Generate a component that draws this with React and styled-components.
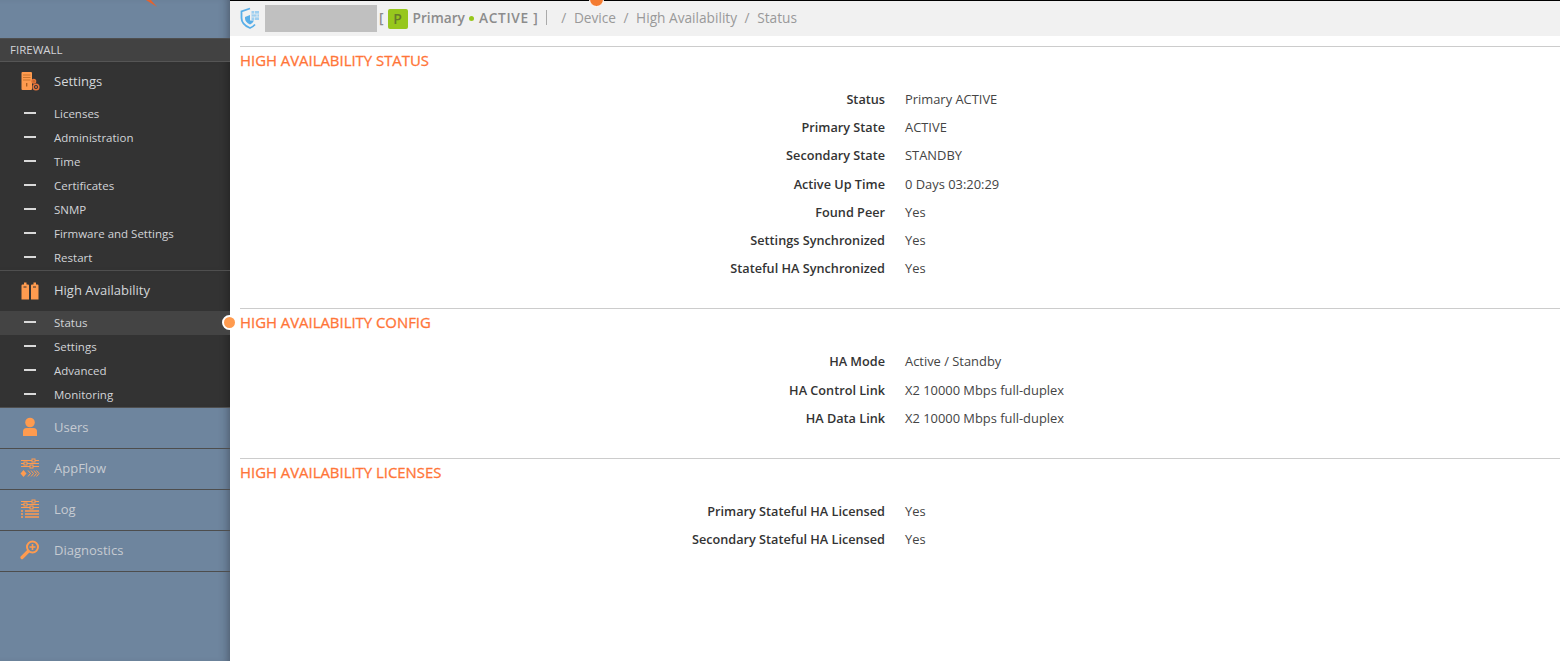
import React from "react";
import styled, { createGlobalStyle } from "styled-components";

const Global = createGlobalStyle`
  html, body { margin: 0; padding: 0; height: 100%; overflow: hidden; }
  body { font-family: "Open Sans", "Noto Sans", sans-serif; background: #fff; }
`;

const orange = "#ff9b4f";
const slate = "#6e859e";

const SettingsIcon = () => (
  <svg width="20" height="20" viewBox="0 0 20 20">
    <rect x="1.500" y="1" width="10.500" height="18" rx="1" fill={orange} />
    <path d="M3 4h7.500M3 6.500h7.500M3 9h7.500" stroke="#c9742c" strokeWidth="1" />
    <path d="M6.700 12v3.500" stroke="#a85c1e" strokeWidth="1.300" />
    <circle cx="13.800" cy="10.300" r="1.900" fill="#c96a2a" stroke="#e8743b" strokeWidth="1.200" />
    <circle cx="16" cy="16" r="2.800" fill="none" stroke="#e8743b" strokeWidth="1.500" />
    <circle cx="16" cy="16" r="1" fill="#e8743b" />
  </svg>
);

const HaIcon = () => (
  <svg width="20" height="20" viewBox="0 0 20 20">
    <path d="M1.500 5.500q0-1 1-1H4V2.500h2.500v2H8q1 0 1 1V19.500H1.500z" fill={orange} />
    <path d="M11 5.500q0-1 1-1h1.500V2.500H16v2h1.500q1 0 1 1V19.500H11z" fill={orange} />
    <path d="M3.500 7h3M13 7h3" stroke="#333" strokeWidth="1.200" />
  </svg>
);

const UsersIcon = () => (
  <svg width="20" height="20" viewBox="0 0 20 20">
    <circle cx="10" cy="5.500" r="4.800" fill={orange} />
    <path d="M3 19v-4.500q0-3.500 3.500-3.500h7q3.500 0 3.500 3.500V19z" fill={orange} />
  </svg>
);

const Sliders = () => (
  <g stroke={orange} strokeWidth="1" fill="none">
    <path d="M1 2.500h18M1 5.500h18M1 8.500h18" />
    <rect x="12" y="1" width="3" height="3" fill={slate} />
    <rect x="4" y="4" width="3" height="3" fill={slate} />
    <rect x="10" y="7" width="3" height="3" fill={slate} />
  </g>
);

const AppFlowIcon = () => (
  <svg width="20" height="20" viewBox="0 0 20 20">
    <Sliders />
    <path d="M3.500 12l3 3.500-3 3.500-3-3.500z" fill={orange} />
    <path d="M8 12.500l2.500 3-2.500 3M11 12.500l2.500 3-2.500 3M14 12.500l2.500 3-2.500 3M16.500 12.500l2.500 3-2.500 3" stroke={orange} strokeWidth="1" fill="none" />
  </svg>
);

const LogIcon = () => (
  <svg width="20" height="20" viewBox="0 0 20 20">
    <Sliders />
    <path d="M1 12h2M5 12h14M1 15h2M5 15h14M1 18h2M5 18h14" stroke={orange} strokeWidth="1.400" />
  </svg>
);

const DiagIcon = () => (
  <svg width="20" height="20" viewBox="0 0 20 20">
    <circle cx="12.500" cy="7" r="5.500" fill="none" stroke={orange} strokeWidth="2" />
    <path d="M12.500 4v6M9.500 7h6" stroke={orange} strokeWidth="1.600" />
    <path d="M8 11.500L2 17.500" stroke={orange} strokeWidth="3.200" strokeLinecap="round" />
  </svg>
);

const ShieldIcon = () => (
  <svg width="20" height="22" viewBox="0 0 20 22">
    <path d="M10 1.500L1.500 4.500v6.500q0 6.500 8.500 10 3-1.200 5-3.500" fill="none" stroke="#58aee8" strokeWidth="1.800" />
    <path d="M10 8L5 10v1.500q0 3.500 5 6 3-1.500 4-4h-4z" fill="#58aee8" />
    <path d="M11.500 4h7.500v9h-7.500z" fill="#9fcff0" />
    <path d="M11.500 7h7.500M11.500 10h7.500M14.500 4v3M17 7v3M14.500 10v3" stroke="#f1f1f1" strokeWidth="0.700" />
  </svg>
);

const Page = styled.div`
  display: flex;
  width: 1560px;
  height: 661px;
  overflow: hidden;
`;

const Sidebar = styled.aside`
  position: relative;
  flex: 0 0 230px;
  background: ${slate};
  box-shadow: inset -8px 0 8px -6px rgba(40, 45, 55, 0.45);
`;

const Tick = styled.svg`
  display: block;
  position: absolute;
  left: 146px;
  top: 0;
`;

const SectionLabel = styled.div`
  margin-top: 38px;
  height: 20px;
  display: flex;
  align-items: center;
  padding: 0 0 2px 10px;
  font-size: 11.500px;
  color: #d2d4d8;
  background: #424242;
  border-top: 1px solid #4e4e4e;
  border-bottom: 1px solid #555;
`;

const Group = styled.div`
  background: #333;
  border-bottom: 1px solid #4f4f4f;
  box-shadow: inset -8px 0 8px -6px rgba(0, 0, 0, 0.3);
`;

const GroupHead = styled.div`
  display: flex;
  align-items: center;
  height: 40px;
  padding: 0 0 2px 20px;
  box-sizing: border-box;
  gap: 14px;
  font-size: 13px;
  color: #d4d7da;
`;

const Item = styled.div`
  position: relative;
  display: flex;
  align-items: center;
  height: 24px;
  padding: 0 0 2px 24px;
  box-sizing: border-box;
  font-size: 11.500px;
  color: #d2d4d8;
  background: ${(p) => (p.$active ? "#444" : "transparent")};
  &::before {
    content: "";
    width: 12px;
    height: 2px;
    background: #d9d9d9;
    margin-right: 18px;
  }
`;

const Dot = styled.span`
  position: absolute;
  right: -7px;
  top: 4px;
  width: 11px;
  height: 11px;
  border-radius: 50%;
  background: ${orange};
  border: 2px solid #fff;
  z-index: 2;
`;

const Collapsed = styled.div`
  display: flex;
  align-items: center;
  height: 41px;
  padding: 0 0 2px 20px;
  box-sizing: border-box;
  gap: 14px;
  font-size: 13px;
  color: #c6cbd2;
  border-bottom: 1px solid #4d4d4d;
`;

const Main = styled.main`
  flex: 1;
  min-width: 0;
`;

const TopBar = styled.header`
  position: relative;
  display: flex;
  align-items: center;
  height: 36px;
  padding: 0 0 2px 10px;
  box-sizing: border-box;
  background: #f1f1f1;
  border-top: 1px solid #000;
  font-size: 14px;
  color: #999;
`;

const TopDot = styled.span`
  position: absolute;
  left: 359px;
  top: -9px;
  width: 13px;
  height: 13px;
  border-radius: 50%;
  background: #f47b30;
  border: 1.500px solid #fff;
`;

const Masked = styled.span`
  width: 112px;
  height: 27px;
  margin: 2px 2px 0 5px;
  background: #c0c0c0;
`;

const Bold = styled.span`
  font-weight: 600;
  color: #8c8c8c;
  font-size: 13.700px;
`;

const Wide = styled.span`
  letter-spacing: 0.7px;
`;

const Badge = styled.span`
  width: 20px;
  height: 20px;
  margin: 2px 5px 0 4px;
  border-radius: 2px;
  background: #97c71d;
  color: #667a2a;
  font-weight: 600;
  font-size: 14px;
  text-align: center;
  line-height: 20px;
`;

const GreenDot = styled.span`
  display: inline-block;
  width: 5px;
  height: 5px;
  margin: 0 5px 0 4px;
  border-radius: 50%;
  background: #97c71d;
  vertical-align: 2px;
`;

const Crumbs = styled.nav`
  display: flex;
  margin-left: 8px;
  padding-left: 15px;
  gap: 7.500px;
  font-size: 13.700px;
  color: #999;
  position: relative;
  &::before {
    content: "";
    position: absolute;
    left: 0;
    top: 2px;
    bottom: 2px;
    width: 1px;
    background: #aaa;
  }
`;

const Sections = styled.div`
  padding-top: 10px;
`;

const Section = styled.section`
  margin-left: 10px;
  border-top: 1px solid #ccc;
  height: ${(p) => p.$h}px;
  box-sizing: border-box;
`;

const Title = styled.h2`
  margin: 0;
  padding-top: 5px;
  height: 28px;
  box-sizing: border-box;
  font-size: 14.900px;
  line-height: 16px;
  font-weight: 400;
  -webkit-text-stroke: 0.3px #ff7538;
  color: #ff7538;
`;

const Rows = styled.div`
  padding-top: ${(p) => p.$top}px;
`;

const Row = styled.div`
  display: flex;
  height: 28.200px;
  align-items: center;
  gap: 20px;
  font-size: 12.900px;
  color: #444;
`;

const Label = styled.span`
  width: 645px;
  text-align: right;
  font-size: 12.700px;
  font-weight: 600;
  color: #333;
`;

const settings = ["Licenses", "Administration", "Time", "Certificates", "SNMP", "Firmware and Settings", "Restart"];
const ha = ["Status", "Settings", "Advanced", "Monitoring"];
const others = [
  ["Users", UsersIcon],
  ["AppFlow", AppFlowIcon],
  ["Log", LogIcon],
  ["Diagnostics", DiagIcon],
];

const sections = [
  {
    title: "HIGH AVAILABILITY STATUS",
    h: 262,
    top: 9.9,
    rows: [
      ["Status", "Primary ACTIVE"],
      ["Primary State", "ACTIVE"],
      ["Secondary State", "STANDBY"],
      ["Active Up Time", "0 Days 03:20:29"],
      ["Found Peer", "Yes"],
      ["Settings Synchronized", "Yes"],
      ["Stateful HA Synchronized", "Yes"],
    ],
  },
  {
    title: "HIGH AVAILABILITY CONFIG",
    h: 150,
    top: 10.3,
    rows: [
      ["HA Mode", "Active / Standby"],
      ["HA Control Link", "X2 10000 Mbps full-duplex"],
      ["HA Data Link", "X2 10000 Mbps full-duplex"],
    ],
  },
  {
    title: "HIGH AVAILABILITY LICENSES",
    h: 120,
    top: 10,
    rows: [
      ["Primary Stateful HA Licensed", "Yes"],
      ["Secondary Stateful HA Licensed", "Yes"],
    ],
  },
];

export default function App() {
  return (
    <Page>
      <Global />
      <Sidebar>
        <Tick width="20" height="8" viewBox="0 0 20 8">
          <path d="M0 0h5l6 7z" fill="#e4632f" />
        </Tick>
        <SectionLabel>FIREWALL</SectionLabel>
        <Group>
          <GroupHead>
            <SettingsIcon />
            Settings
          </GroupHead>
          {settings.map((s) => (
            <Item key={s}>{s}</Item>
          ))}
        </Group>
        <Group>
          <GroupHead>
            <HaIcon />
            High Availability
          </GroupHead>
          {ha.map((s) => (
            <Item key={s} $active={s === "Status"}>
              {s}
              {s === "Status" && <Dot />}
            </Item>
          ))}
        </Group>
        {others.map(([name, Icon]) => (
          <Collapsed key={name}>
            <Icon />
            {name}
          </Collapsed>
        ))}
      </Sidebar>
      <Main>
        <TopBar>
          <TopDot />
          <ShieldIcon />
          <Masked />
          <Bold>[</Bold>
          <Badge>P</Badge>
          <Bold>
            Primary
            <GreenDot />
            <Wide>ACTIVE ]</Wide>
          </Bold>
          <Crumbs>
            <span>/</span>
            <span>Device</span>
            <span>/</span>
            <span>High Availability</span>
            <span>/</span>
            <span>Status</span>
          </Crumbs>
        </TopBar>
        <Sections>
          {sections.map((sec) => (
            <Section key={sec.title} $h={sec.h}>
              <Title>{sec.title}</Title>
              <Rows $top={sec.top}>
                {sec.rows.map(([k, v]) => (
                  <Row key={k}>
                    <Label>{k}</Label>
                    <span>{v}</span>
                  </Row>
                ))}
              </Rows>
            </Section>
          ))}
        </Sections>
      </Main>
    </Page>
  );
}
